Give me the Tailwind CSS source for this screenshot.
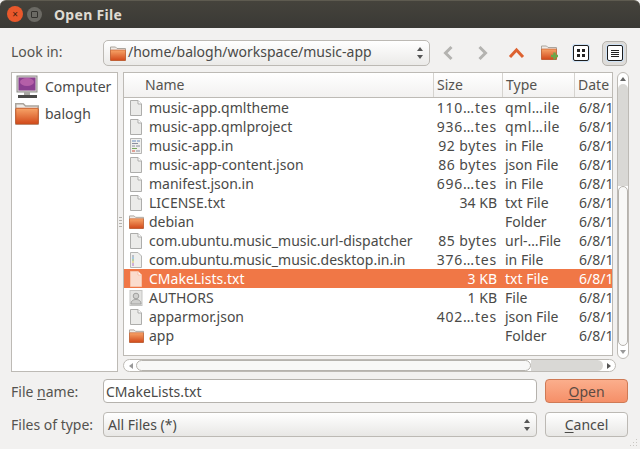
<!DOCTYPE html>
<html lang="en">
<head>
  <meta charset="UTF-8" />
  <title>Open File</title>
  <script src="https://cdn.jsdelivr.net/npm/@tailwindcss/browser@4"></script>
</head>
<body class="bg-[#f2f1f0] text-[#4a4a48] font-['Noto_Sans',sans-serif] text-[14px] leading-[19px] overflow-hidden">
  <svg width="0" height="0" class="absolute">
    <defs>
      <linearGradient id="fold" x1="0" y1="0" x2="0" y2="1"><stop offset="0" stop-color="#f7a468"/><stop offset="1" stop-color="#d2491a"/></linearGradient>
      <symbol id="folder" viewBox="0 0 16 15">
        <path d="M.5 1h5l1.500 1.500h8.500V14.500H.5z" fill="#eeeae6" stroke="#aaa49c"/>
        <rect x="0.500" y="4" width="15" height="10.500" rx="0.500" fill="url(#fold)" stroke="#c2521f" stroke-width="0.600"/>
      </symbol>
      <symbol id="doc" viewBox="0 0 14 16">
        <path d="M1.500.5h7.500l3.500 3.500v11.500h-11z" fill="#ebebe9" stroke="#adadab"/>
        <path d="M9 .5v3.500h3.500" fill="#fff" stroke="#adadab"/>
      </symbol>
      <symbol id="docsel" viewBox="0 0 14 16">
        <path d="M1.500.5h7.500l3.500 3.500v11.500h-11z" fill="#fbdccd" stroke="#f8c3aa"/>
        <path d="M9 .5v3.500h3.500" fill="#fff" stroke="#f8c3aa"/>
      </symbol>
      <symbol id="script" viewBox="0 0 14 16">
        <path d="M1.500.5h11v15h-11z" fill="#efefed" stroke="#b5b5b3"/>
        <path d="M3 3h4M8 3h3" stroke="#6a8fc0"/><path d="M3 5.500h6M3 8h3M7 8h4" stroke="#8a8fa0"/><path d="M3 10.500h5" stroke="#7aa860"/><path d="M3 13h3" stroke="#d0503c"/><path d="M7 13h4" stroke="#8a8fa0"/>
      </symbol>
      <symbol id="desktop" viewBox="0 0 14 16">
        <path d="M1.500.5h7.500l3.500 3.500v11.500h-11z" fill="#efefed" stroke="#b5b5b3"/>
        <path d="M4 3v2" stroke="#8a8fa0"/><path d="M4 5v2" stroke="#5f9fd0"/><path d="M4 7v2" stroke="#7ab060"/><path d="M4 9v2" stroke="#d8c050"/><path d="M4 11v3" stroke="#b070c0"/>
      </symbol>
      <symbol id="person" viewBox="0 0 14 16">
        <rect x="1" y="0.500" width="12" height="15" fill="#e4e4e2" stroke="#c5c5c3"/>
        <circle cx="7" cy="6" r="2.800" fill="#d0d0ce" stroke="#a0a09e"/>
        <path d="M2 14c0-3.500 2.500-4.500 5-4.500s5 1 5 4.500z" fill="#d0d0ce" stroke="#a0a09e"/>
      </symbol>
    </defs>
  </svg>

  <div class="w-[640px] h-[449px] flex flex-col relative">
    <!-- title bar -->
    <div class="h-[28px] shrink-0 rounded-t-[6px] border-t border-[#5e5b50] bg-gradient-to-b from-[#45433c] to-[#3a3935] flex items-center pl-[7px] pb-[1px]">
      <div class="w-[16px] h-[16px] rounded-full bg-[#e9582b] flex items-center justify-center text-[#40200f] text-[10px] leading-none">×</div>
      <div class="w-[15px] h-[15px] rounded-full bg-[#6b6a64] ml-[4px] flex items-center justify-center"><div class="w-[7px] h-[7px] border border-[#33322e] rounded-[1px]"></div></div>
      <div class="ml-[12px] text-[#dfdbd2] font-bold text-[14px] tracking-[0.3px]">Open File</div>
    </div>

    <!-- look in row -->
    <div class="h-[26px] mt-[12px] flex items-center pl-[11px]">
      <div class="w-[92px] pb-[3px] text-[#55534f]">Look in:</div>
      <div class="w-[327px] h-[26px] rounded-[5px] border border-[#bcb9b4] bg-gradient-to-b from-white to-[#ebeae8] flex items-center pl-[6px] pr-[5px]">
        <svg class="w-[16px] h-[15px]"><use href="#folder"/></svg>
        <span class="ml-[2px] pb-[3px] flex-1">/home/balogh/workspace/music-app</span>
        <svg width="8" height="14" viewBox="0 0 8 14"><path d="M4 1l3 4H1zM4 13l3-4H1z" fill="#555"/></svg>
      </div>
      <!-- toolbar -->
      <svg class="ml-[12px]" width="12" height="16" viewBox="0 0 12 16"><path d="M9.500 2L3.500 8l6 6" fill="none" stroke="#b4b3b0" stroke-width="3"/></svg>
      <svg class="ml-[23px]" width="12" height="16" viewBox="0 0 12 16"><path d="M2.500 2l6 6-6 6" fill="none" stroke="#b4b3b0" stroke-width="3"/></svg>
      <svg class="ml-[19px]" width="17" height="12" viewBox="0 0 17 12"><path d="M2 10l6.500-7 6.500 7" fill="none" stroke="#dd6230" stroke-width="3"/></svg>
      <svg class="ml-[16px]" width="18" height="16" viewBox="0 0 18 16"><use href="#folder" width="16" height="15"/><path d="M10 11h7M13.500 7.500v7" stroke="#6aa84a" stroke-width="2.500"/></svg>
      <div class="ml-[14px] w-[16px] h-[16px] rounded-[2px] border border-[#1c1c1c] bg-white grid grid-cols-2 gap-[2px] p-[3px] shadow-[0_0_0_1px_#cfe2f5]">
        <div class="bg-[#222]"></div><div class="bg-[#222]"></div><div class="bg-[#222]"></div><div class="bg-[#222]"></div>
      </div>
      <div class="ml-[13px] w-[25px] h-[25px] rounded-[5px] border border-[#b5b2ad] bg-[#dedcd9] flex items-center justify-center">
        <div class="w-[16px] h-[16px] rounded-[2px] border border-[#1c1c1c] bg-white flex flex-col justify-center gap-[1px] px-[3px] shadow-[0_0_0_1px_#cfe2f5]">
          <div class="h-px bg-[#222]"></div><div class="h-px bg-[#222]"></div><div class="h-px bg-[#222]"></div><div class="h-px bg-[#222]"></div>
        </div>
      </div>
    </div>

    <!-- main panes -->
    <div class="flex h-[300px] mt-[6px] pl-[11px] relative">
      <div class="w-[107px] h-[300px] border border-[#bdbab5] bg-white shrink-0">
        <div class="h-[27px] flex items-center pl-[4px]">
          <svg width="22" height="24" viewBox="0 0 22 24">
            <rect x="1" y="1" width="20" height="16" fill="#d8d6d2" stroke="#8f8d89"/>
            <rect x="2.500" y="2.500" width="17" height="13" fill="#8a3f90"/>
            <ellipse cx="11" cy="7" rx="7" ry="4" fill="#b45fa8"/>
            <rect x="8" y="17" width="6" height="3" fill="#a9a7a3"/>
            <rect x="2" y="20" width="19" height="3" fill="#4a4a48"/>
          </svg>
          <span class="ml-[7px]">Computer</span>
        </div>
        <div class="h-[26px] flex items-center pl-[3px]">
          <svg class="w-[24px] h-[23px]"><use href="#folder"/></svg>
          <span class="ml-[6px]">balogh</span>
        </div>
      </div>

      <div class="w-[5px] shrink-0 flex flex-col items-center justify-center gap-[2px]">
        <div class="w-[3px] h-px bg-[#b5b3ae]"></div><div class="w-[3px] h-px bg-[#b5b3ae]"></div><div class="w-[3px] h-px bg-[#b5b3ae]"></div><div class="w-[3px] h-px bg-[#b5b3ae]"></div>
      </div>

      <div class="w-[506px] flex flex-col">
        <div class="flex h-[284px]">
          <!-- file list -->
          <div class="w-[490px] h-[284px] border border-[#bdbab5] bg-white overflow-hidden">
            <div class="h-[25px] border-b border-[#bdbab5] bg-gradient-to-b from-white to-[#f2f1f0] grid grid-cols-[309px_69px_72px_38px] text-[#55534f]">
              <div class="pl-[21px] pt-[2px]">Name</div>
              <div class="pl-[3px] pt-[2px] border-l border-[#d5d3cf]">Size</div>
              <div class="pl-[3px] pt-[2px] border-l border-[#d5d3cf]">Type</div>
              <div class="pl-[3px] pt-[2px] border-l border-[#d5d3cf] whitespace-nowrap overflow-hidden">Date</div>
            </div>
            <div>
              <div class="h-[19px] grid grid-cols-[309px_69px_72px_38px] whitespace-nowrap"><div class="pl-[5px] flex items-center"><svg class="w-[14px] h-[16px] shrink-0"><use href="#doc"/></svg><span class="ml-[6px]">music-app.qmltheme</span></div><div class="text-right pr-[5px] tracking-[0.8px]">110…tes</div><div class="pl-[3px] tracking-[0.5px]">qml…ile</div><div class="pl-[5px] overflow-hidden">6/8/15</div></div>
              <div class="h-[19px] grid grid-cols-[309px_69px_72px_38px] whitespace-nowrap"><div class="pl-[5px] flex items-center"><svg class="w-[14px] h-[16px] shrink-0"><use href="#doc"/></svg><span class="ml-[6px]">music-app.qmlproject</span></div><div class="text-right pr-[5px] tracking-[0.8px]">936…tes</div><div class="pl-[3px] tracking-[0.5px]">qml…ile</div><div class="pl-[5px] overflow-hidden">6/8/15</div></div>
              <div class="h-[19px] grid grid-cols-[309px_69px_72px_38px] whitespace-nowrap"><div class="pl-[5px] flex items-center"><svg class="w-[14px] h-[16px] shrink-0"><use href="#script"/></svg><span class="ml-[6px]">music-app.in</span></div><div class="text-right pr-[5px] tracking-[0.5px]">92 bytes</div><div class="pl-[3px]">in File</div><div class="pl-[5px] overflow-hidden">6/8/15</div></div>
              <div class="h-[19px] grid grid-cols-[309px_69px_72px_38px] whitespace-nowrap"><div class="pl-[5px] flex items-center"><svg class="w-[14px] h-[16px] shrink-0"><use href="#doc"/></svg><span class="ml-[6px]">music-app-content.json</span></div><div class="text-right pr-[5px] tracking-[0.5px]">86 bytes</div><div class="pl-[3px]">json File</div><div class="pl-[5px] overflow-hidden">6/8/15</div></div>
              <div class="h-[19px] grid grid-cols-[309px_69px_72px_38px] whitespace-nowrap"><div class="pl-[5px] flex items-center"><svg class="w-[14px] h-[16px] shrink-0"><use href="#doc"/></svg><span class="ml-[6px]">manifest.json.in</span></div><div class="text-right pr-[5px] tracking-[0.8px]">696…tes</div><div class="pl-[3px]">in File</div><div class="pl-[5px] overflow-hidden">6/8/15</div></div>
              <div class="h-[19px] grid grid-cols-[309px_69px_72px_38px] whitespace-nowrap"><div class="pl-[5px] flex items-center"><svg class="w-[14px] h-[16px] shrink-0"><use href="#doc"/></svg><span class="ml-[6px]">LICENSE.txt</span></div><div class="text-right pr-[5px]">34 KB</div><div class="pl-[3px]">txt File</div><div class="pl-[5px] overflow-hidden">6/8/15</div></div>
              <div class="h-[19px] grid grid-cols-[309px_69px_72px_38px] whitespace-nowrap"><div class="pl-[5px] flex items-center"><svg class="w-[15px] h-[14px] shrink-0"><use href="#folder"/></svg><span class="ml-[5px]">debian</span></div><div></div><div class="pl-[3px]">Folder</div><div class="pl-[5px] overflow-hidden">6/8/15</div></div>
              <div class="h-[19px] grid grid-cols-[309px_69px_72px_38px] whitespace-nowrap"><div class="pl-[5px] flex items-center"><svg class="w-[14px] h-[16px] shrink-0"><use href="#doc"/></svg><span class="ml-[6px]">com.ubuntu.music_music.url-dispatcher</span></div><div class="text-right pr-[5px] tracking-[0.5px]">85 bytes</div><div class="pl-[3px]">url-…File</div><div class="pl-[5px] overflow-hidden">6/8/15</div></div>
              <div class="h-[19px] grid grid-cols-[309px_69px_72px_38px] whitespace-nowrap"><div class="pl-[5px] flex items-center"><svg class="w-[14px] h-[16px] shrink-0"><use href="#desktop"/></svg><span class="ml-[6px]">com.ubuntu.music_music.desktop.in.in</span></div><div class="text-right pr-[5px] tracking-[0.8px]">376…tes</div><div class="pl-[3px]">in File</div><div class="pl-[5px] overflow-hidden">6/8/15</div></div>
              <div class="h-[19px] grid grid-cols-[309px_69px_72px_38px] whitespace-nowrap bg-[#f07746] text-white"><div class="pl-[5px] flex items-center"><svg class="w-[14px] h-[16px] shrink-0"><use href="#docsel"/></svg><span class="ml-[6px]">CMakeLists.txt</span></div><div class="text-right pr-[5px]">3 KB</div><div class="pl-[3px]">txt File</div><div class="pl-[5px] overflow-hidden">6/8/15</div></div>
              <div class="h-[19px] grid grid-cols-[309px_69px_72px_38px] whitespace-nowrap"><div class="pl-[5px] flex items-center"><svg class="w-[14px] h-[16px] shrink-0"><use href="#person"/></svg><span class="ml-[6px]">AUTHORS</span></div><div class="text-right pr-[5px]">1 KB</div><div class="pl-[3px]">File</div><div class="pl-[5px] overflow-hidden">6/8/15</div></div>
              <div class="h-[19px] grid grid-cols-[309px_69px_72px_38px] whitespace-nowrap"><div class="pl-[5px] flex items-center"><svg class="w-[14px] h-[16px] shrink-0"><use href="#doc"/></svg><span class="ml-[6px]">apparmor.json</span></div><div class="text-right pr-[5px] tracking-[0.8px]">402…tes</div><div class="pl-[3px]">json File</div><div class="pl-[5px] overflow-hidden">6/8/15</div></div>
              <div class="h-[19px] grid grid-cols-[309px_69px_72px_38px] whitespace-nowrap"><div class="pl-[5px] flex items-center"><svg class="w-[15px] h-[14px] shrink-0"><use href="#folder"/></svg><span class="ml-[5px]">app</span></div><div></div><div class="pl-[3px]">Folder</div><div class="pl-[5px] overflow-hidden">6/8/15</div></div>
            </div>
          </div>
          <!-- vertical scrollbar -->
          <div class="ml-[4px] w-[12px] h-[287px] rounded-full border border-[#bdbab5] bg-white flex flex-col items-center overflow-hidden">
            <svg class="shrink-0 mt-[4px] mb-[3px]" width="6" height="4" viewBox="0 0 6 4"><path d="M3 0l3 4H0z" fill="#666"/></svg>
            <div class="w-full h-[102px] bg-[#d9d8d5] rounded-t-full shrink-0"></div>
            <div class="w-full h-[160px] bg-[#f8f8f7] border border-[#b5b2ad] rounded-full shrink-0"></div>
            <svg class="shrink-0 mt-[4px]" width="6" height="4" viewBox="0 0 6 4"><path d="M3 4l3-4H0z" fill="#999"/></svg>
          </div>
        </div>
        <!-- horizontal scrollbar -->
        <div class="mt-[3px] w-[493px] h-[13px] rounded-full border border-[#bdbab5] bg-white flex items-center overflow-hidden">
          <svg class="ml-[5px] mr-[3px] shrink-0" width="4" height="6" viewBox="0 0 4 6"><path d="M0 3l4-3v6z" fill="#999"/></svg>
          <div class="w-[395px] h-full bg-[#f8f8f7] border border-[#b5b2ad] rounded-full shrink-0"></div>
          <div class="w-[72px] h-full bg-[#d9d8d5] rounded-r-full shrink-0"></div>
          <svg class="ml-[4px] shrink-0" width="4" height="6" viewBox="0 0 4 6"><path d="M4 3L0 0v6z" fill="#555"/></svg>
        </div>
      </div>
    </div>

    <!-- file name row -->
    <div class="h-[24px] mt-[7px] flex items-center pl-[11px]">
      <div class="w-[92px] text-[#55534f]">File <u class="underline-offset-2">n</u>ame:</div>
      <div class="w-[434px] h-[24px] rounded-[4px] border border-[#b5b2ad] bg-white pl-[2px] flex items-center">CMakeLists.txt</div>
      <div class="ml-[8px] w-[83px] h-[24px] rounded-[4px] border border-[#cf7a55] bg-gradient-to-b from-[#fbae8c] to-[#f58f68] flex items-center justify-center text-[#5d4a42]"><span><u class="underline-offset-2">O</u>pen</span></div>
    </div>

    <!-- files of type row -->
    <div class="h-[25px] mt-[9px] flex items-center pl-[11px]">
      <div class="w-[92px] text-[#55534f]">Files of type:</div>
      <div class="w-[434px] h-[25px] rounded-[4px] border border-[#bcb9b4] bg-gradient-to-b from-white to-[#e8e7e5] pl-[4px] pr-[5px] flex items-center">
        <span class="flex-1">All Files (*)</span>
        <svg width="8" height="14" viewBox="0 0 8 14"><path d="M4 1l3 4H1zM4 13l3-4H1z" fill="#555"/></svg>
      </div>
      <div class="ml-[8px] w-[83px] h-[25px] rounded-[4px] border border-[#bcb9b4] bg-gradient-to-b from-white to-[#e8e7e5] flex items-center justify-center"><span><u class="underline-offset-2">C</u>ancel</span></div>
    </div>

    <!-- resize grip -->
    <svg class="absolute right-[2px] bottom-[2px]" width="9" height="9" viewBox="0 0 9 9" fill="#c9c7c3">
      <rect x="7" y="1" width="1" height="1"/><rect x="4" y="4" width="1" height="1"/><rect x="7" y="4" width="1" height="1"/><rect x="1" y="7" width="1" height="1"/><rect x="4" y="7" width="1" height="1"/><rect x="7" y="7" width="1" height="1"/>
    </svg>
  </div>
</body>
</html>
